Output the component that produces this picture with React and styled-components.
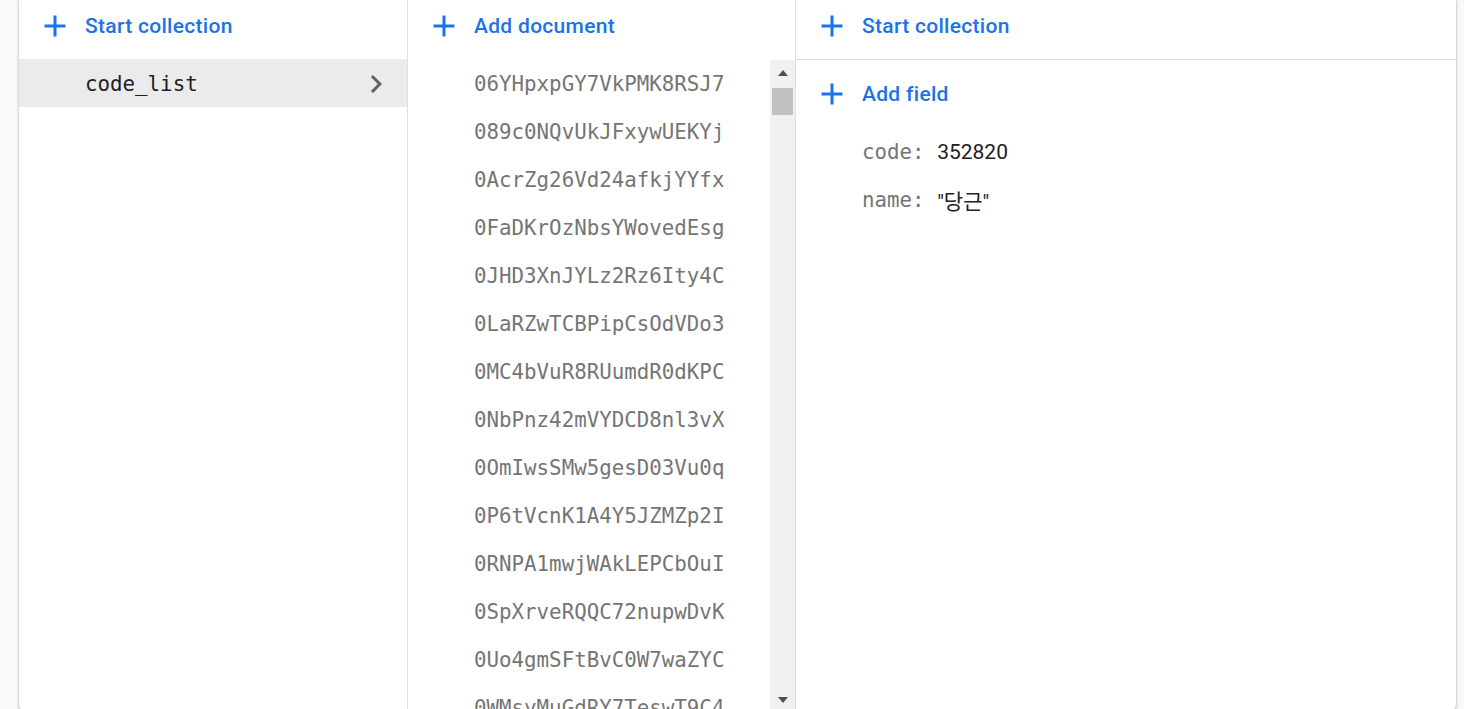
import React from "react";
import styled, { createGlobalStyle } from "styled-components";

const Global = createGlobalStyle`
  html, body { margin: 0; padding: 0; height: 100%; overflow: hidden; }
  body { background: #f8f9fa; font-family: Roboto, "Noto Sans", sans-serif; }
  *, *::before, *::after { box-sizing: border-box; }
`;

const Page = styled.div`
  height: 709px;
  display: flex;
  padding-left: 19px;
  padding-right: 8px;
`;

const Card = styled.div`
  flex: 1;
  height: 712px;
  background: #fff;
  border-radius: 0 0 8px 8px;
  box-shadow: 0 1px 2px rgba(60,64,67,.3), 0 1px 3px 1px rgba(60,64,67,.15);
  display: flex;
  overflow: hidden;
`;

const Column = styled.div`
  width: ${(p) => p.$w || "auto"};
  flex: ${(p) => (p.$w ? "none" : 1)};
  border-right: ${(p) => (p.$last ? "none" : "1px solid #e0e0e0")};
  display: flex;
  flex-direction: column;
  min-height: 0;
`;

const Header = styled.div`
  height: ${(p) => p.$h || 60}px;
  padding-top: 2px;
  border-bottom: ${(p) => (p.$line ? "1px solid #e0e0e0" : "none")};
  flex: none;
`;

const ActionButton = styled.div`
  height: 48px;
  display: flex;
  align-items: center;
  padding-left: 18px;
  gap: 12px;
  color: #1a73e8;
  font-size: 21px;
  font-weight: 500;
  letter-spacing: 0.3px;
  svg { width: 36px; height: 36px; fill: #1a73e8; flex: none; }
`;

const CollectionRow = styled.div`
  height: 48px;
  display: flex;
  align-items: center;
  justify-content: space-between;
  padding: 1px 13px 0 66px;
  background: ${(p) => (p.$active ? "#ebebeb" : "transparent")};
  font-family: "DejaVu Sans Mono", "Liberation Mono", monospace;
  font-size: 20.8px;
  color: #202124;
  svg { width: 36px; height: 36px; fill: #5f6368; }
`;

const ListArea = styled.div`
  flex: 1;
  display: flex;
  min-height: 0;
`;

const DocList = styled.div`
  flex: 1;
  overflow: hidden;
`;

const DocRow = styled.div`
  height: 48px;
  display: flex;
  align-items: center;
  padding-left: 66px;
  font-family: "DejaVu Sans Mono", "Liberation Mono", monospace;
  font-size: 20.8px;
  color: #757575;
  white-space: nowrap;
`;

const ScrollTrack = styled.div`
  width: 25px;
  flex: none;
  background: #f1f1f1;
  display: flex;
  flex-direction: column;
  align-items: center;
`;

const ArrowBtn = styled.div`
  height: 25px;
  width: 100%;
  display: flex;
  align-items: center;
  justify-content: center;
  svg { width: 12px; height: 8px; fill: #505050; }
`;

const Thumb = styled.div`
  width: 21px;
  height: 27px;
  margin-top: 3px;
  background: #c1c1c1;
`;

const Spacer = styled.div`
  flex: 1;
`;

const FieldBody = styled.div`
  padding-top: 10px;
`;

const FieldList = styled.div`
  margin-top: 10px;
`;

const FieldRow = styled.div`
  height: 48px;
  display: flex;
  align-items: center;
  padding-left: 66px;
  font-size: 21px;
`;

const FieldKey = styled.span`
  font-family: "DejaVu Sans Mono", "Liberation Mono", monospace;
  font-size: 20.8px;
  color: #757575;
  white-space: pre;
`;

const FieldValue = styled.span`
  font-family: Roboto, "Noto Sans CJK KR", sans-serif;
  color: #202124;
`;

const PlusIcon = () => (
  <svg viewBox="0 0 24 24"><path d="M19 13h-6v6h-2v-6H5v-2h6V5h2v6h6v2z" /></svg>
);
const ChevronIcon = () => (
  <svg viewBox="0 0 24 24"><path d="M10 6L8.59 7.41 13.17 12l-4.58 4.59L10 18l6-6z" /></svg>
);

const docs = [
  "06YHpxpGY7VkPMK8RSJ7",
  "089c0NQvUkJFxywUEKYj",
  "0AcrZg26Vd24afkjYYfx",
  "0FaDKrOzNbsYWovedEsg",
  "0JHD3XnJYLz2Rz6Ity4C",
  "0LaRZwTCBPipCsOdVDo3",
  "0MC4bVuR8RUumdR0dKPC",
  "0NbPnz42mVYDCD8nl3vX",
  "0OmIwsSMw5gesD03Vu0q",
  "0P6tVcnK1A4Y5JZMZp2I",
  "0RNPA1mwjWAkLEPCbOuI",
  "0SpXrveRQQC72nupwDvK",
  "0Uo4gmSFtBvC0W7waZYC",
  "0WMsyMuGdRY7TeswT9C4",
  "0XbQ2nRtLmPz8KcVwYs1",
];

export default function App() {
  return (
    <>
      <Global />
      <Page>
        <Card>
          <Column $w="389px">
            <Header $h={59}>
              <ActionButton><PlusIcon />Start collection</ActionButton>
            </Header>
            <CollectionRow $active>
              <span>code_list</span>
              <ChevronIcon />
            </CollectionRow>
          </Column>

          <Column $w="388px">
            <Header>
              <ActionButton><PlusIcon />Add document</ActionButton>
            </Header>
            <ListArea>
              <DocList>
                {docs.map((d) => (
                  <DocRow key={d}>{d}</DocRow>
                ))}
              </DocList>
              <ScrollTrack>
                <ArrowBtn><svg viewBox="0 0 12 8"><path d="M6 1L11 7H1z" /></svg></ArrowBtn>
                <Thumb />
                <Spacer />
                <ArrowBtn><svg viewBox="0 0 12 8"><path d="M1 1h10L6 7z" /></svg></ArrowBtn>
              </ScrollTrack>
            </ListArea>
          </Column>

          <Column $last>
            <Header $line>
              <ActionButton><PlusIcon />Start collection</ActionButton>
            </Header>
            <FieldBody>
              <ActionButton><PlusIcon />Add field</ActionButton>
              <FieldList>
                <FieldRow><FieldKey>code: </FieldKey><FieldValue>352820</FieldValue></FieldRow>
                <FieldRow><FieldKey>name: </FieldKey><FieldValue>"당근"</FieldValue></FieldRow>
              </FieldList>
            </FieldBody>
          </Column>
        </Card>
      </Page>
    </>
  );
}
